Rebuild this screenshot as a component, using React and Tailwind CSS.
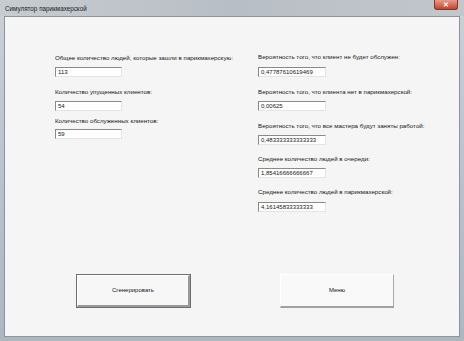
import React from 'react';

const Field = ({ label, value, top, gap, width }) => (
    <div className={top}>
        <div className="h-[8px] leading-[8px] whitespace-nowrap">{label}</div>
        <div
            className={`${gap} ${width} h-[10px] leading-[9px] bg-white border-t border-l border-t-[#8a8a8a] border-l-[#8a8a8a] border-b border-r border-b-[#e4e4e4] border-r-[#e4e4e4] pl-[2px] text-[6px] overflow-hidden whitespace-nowrap`}
        >
            {value}
        </div>
    </div>
);

const App = () => {
    return (
        <div
            className="w-[464px] h-[341px] flex flex-col bg-gradient-to-b from-[#c9d0d6] to-[#aeb6be] text-[#161616] text-[6.2px]"
            style={{ fontFamily: '"Liberation Sans", Arial, sans-serif' }}
        >
            {/* Title bar */}
            <div className="h-[16px] flex items-start justify-between bg-gradient-to-r from-[#c7ccd1] via-[#b8bec5] to-[#c2c7cc]">
                <span className="mt-[4px] ml-[5px] text-[6.3px] text-[#1a1a1a]">Симулятор парикмахерской</span>
                <div className="mr-[6px] w-[24px] h-[10px] rounded-b-[3px] bg-gradient-to-b from-[#e79a8a] to-[#c5412b] border border-[#8a3325] border-t-0 flex items-center justify-center text-white text-[7px] font-bold leading-none">
                    ✕
                </div>
            </div>

            {/* Client area */}
            <div className="mx-[4px] mb-[4px] flex-1 bg-[#f5f5f5] border border-[#8c949c] flex flex-col">
                <div className="flex pt-[37px]">
                    <div className="ml-[50px] w-[203px]">
                        <Field label="Общее количество людей, которые зашли в парикмахерскую:" value="113" gap="mt-[5px]" width="w-[67px]" />
                        <Field label="Количество упущенных клиентов:" value="54" top="mt-[11px]" gap="mt-[5px]" width="w-[67px]" />
                        <Field label="Количество обслуженных клиентов:" value="59" top="mt-[6px]" gap="mt-[4px]" width="w-[67px]" />
                    </div>
                    <div className="-mt-[1px]">
                        <Field label="Вероятность того, что клиент не будет обслужен:" value="0,47787610619469" gap="mt-[6px]" width="w-[68px]" />
                        <Field label="Вероятность того,  что клиента нет в парикмахерской:" value="0,00625" top="mt-[11px]" gap="mt-[5px]" width="w-[68px]" />
                        <Field label="Вероятность того, что все мастера будут заняты работой:" value="0,483333333333333" top="mt-[11px]" gap="mt-[5px]" width="w-[68px]" />
                        <Field label="Среднее количество людей в очереди:" value="1,85416666666667" top="mt-[10px]" gap="mt-[5px]" width="w-[68px]" />
                        <Field label="Среднее количество людей в парикмахерской:" value="4,16145833333333" top="mt-[10px]" gap="mt-[6px]" width="w-[68px]" />
                    </div>
                </div>

                <div className="flex mt-[62px] ml-[71px] gap-[89px] text-[6px]">
                    <button className="w-[115px] h-[34px] border border-[#6e6e6e] bg-[#f7f7f7] p-0">
                        <div className="w-full h-full border-t border-l border-white border-b-2 border-r-2 border-b-[#9a9a9a] border-r-[#9a9a9a] flex items-center justify-center">
                            Сгенерировать
                        </div>
                    </button>
                    <button className="w-[114px] h-[34px] bg-[#f9f9f9] border-t border-l border-t-white border-l-white border-b-2 border-r border-b-[#a0a0a0] border-r-[#a8a8a8] flex items-center justify-center">
                        Меню
                    </button>
                </div>
            </div>
        </div>
    );
};

export default App;
